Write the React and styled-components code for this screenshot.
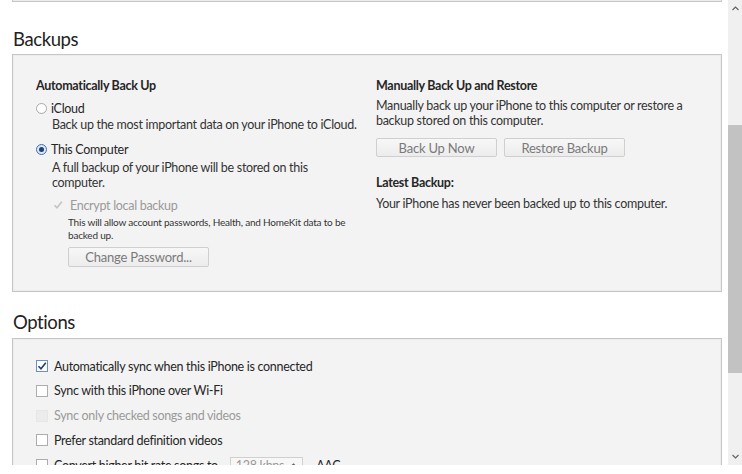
import React from 'react'
import styled, { createGlobalStyle } from 'styled-components'

const Global = createGlobalStyle`
  html, body { margin: 0; padding: 0; background: #fff; }
  body { font-family: Lato, "Open Sans", sans-serif; color: #262626; letter-spacing: -0.3px; }
`

const Window = styled.div`
  width: 742px;
  height: 474px;
  background: #fff;
`

const Viewport = styled.div`
  display: flex;
  height: 465px;
  overflow: hidden;
`

const Content = styled.div`
  flex: 1;
  padding: 0 6px 0 12px;
`

const Panel = styled.div`
  background: #f3f3f3;
  border: 1px solid #c6c6c6;
  box-shadow: inset 0 0 0 1px #ececec;
`

const TopStub = styled(Panel)`
  height: 2px;
  border-top: none;
  box-sizing: border-box;
`

const Heading = styled.h2`
  margin: 0;
  font-weight: 400;
  font-size: 18.5px;
  letter-spacing: -0.4px;
  line-height: 26px;
  padding: ${p => p.$pad};
  color: #222;
`

const BackupsBody = styled.div`
  display: grid;
  grid-template-columns: 340px 1fr;
  padding: 22px 24px 23px 23px;
  height: 236px;
  box-sizing: border-box;
  white-space: nowrap;
`

const Column = styled.div`
  display: flex;
  flex-direction: column;
  align-items: flex-start;
`

const Title = styled.div`
  font-weight: 700;
  font-size: 12.5px;
  line-height: 18px;
  margin-top: ${p => p.$mt || 0}px;
`

const Text = styled.div`
  font-size: 12.5px;
  line-height: ${p => p.$lh || 15}px;
  margin: ${p => p.$m || 0};
  padding-left: ${p => p.$indent || 0}px;
  color: #333;
`

const Small = styled.div`
  font-size: 10px;
  line-height: 13px;
  letter-spacing: -0.2px;
  margin-top: 2px;
  padding-left: 32px;
  color: #333;
`

const Choice = styled.label`
  display: flex;
  align-items: center;
  gap: ${p => p.$gap || 4}px;
  height: 18px;
  flex: none;
  margin-top: ${p => p.$mt || 0}px;
  padding-left: ${p => p.$indent || 0}px;
  font-size: 12.5px;
  white-space: nowrap;
  color: ${p => (p.$muted ? '#9a9a9a' : '#262626')};
`

const Radio = styled.span`
  width: 11px;
  height: 11px;
  border-radius: 50%;
  box-sizing: border-box;
  border: 1px solid ${p => (p.$on ? '#3d6fb6' : '#a8a8a8')};
  background: ${p => (p.$on ? '#dfe8f5' : '#fff')};
  display: flex;
  align-items: center;
  justify-content: center;
  &::after {
    content: '';
    width: 5px;
    height: 5px;
    border-radius: 50%;
    background: ${p => (p.$on ? '#1d3f7a' : 'transparent')};
  }
`

const Box = styled.span`
  width: 12px;
  height: 12px;
  box-sizing: border-box;
  border: 1px solid ${p => (p.$disabled ? '#e6e6e6' : p.$on ? '#6a8fc8' : '#adadad')};
  background: ${p => (p.$disabled ? '#ececec' : '#fff')};
  display: flex;
  align-items: center;
  justify-content: center;
  flex: none;
`

const Button = styled.button`
  width: ${p => p.$w}px;
  height: ${p => p.$h || 20}px;
  margin-top: ${p => p.$mt || 0}px;
  margin-left: ${p => p.$ml || 0}px;
  padding: 0;
  font-family: inherit;
  font-size: 13px;
  letter-spacing: -0.2px;
  color: #7a7a7a;
  background: linear-gradient(#f7f7f7, #ececec);
  border: 1px solid #cfcfcf;
  border-radius: 2px;
`

const ButtonRow = styled.div`
  display: flex;
  gap: 7px;
  margin-top: 10px;
`

const OptionsPanel = styled(Panel)`
  border-bottom: none;
  height: 200px;
  padding: 18px 23px 0;
  display: flex;
  flex-direction: column;
  gap: 6.8px;
`

const Spinner = styled.span`
  display: inline-flex;
  align-items: center;
  gap: 6px;
  height: 15px;
  padding: 0 5px;
  margin: 0 7px 0 6px;
  border: 1px solid #d0d0d0;
  background: #f7f7f7;
  color: #9a9a9a;
`

const Scrollbar = styled.div`
  width: 14px;
  background: #f0f0f0;
  display: flex;
  flex-direction: column;
  align-items: center;
`

const Arrow = styled.div`
  height: 17px;
  display: flex;
  align-items: center;
  justify-content: center;
`

const Track = styled.div`
  flex: 1;
  align-self: stretch;
  display: flex;
  flex-direction: column;
`

const Thumb = styled.div`
  margin-top: 108px;
  height: 248px;
  background: #c2c2c2;
`

const Check = ({ color = '#1d3f7a', size = 10 }) => (
  <svg width={size} height={size} viewBox="0 0 10 10">
    <path d="M1.5 5.2 L4 7.8 L8.8 1.8" fill="none" stroke={color} strokeWidth="1.6" />
  </svg>
)

const Chevron = ({ up }) => (
  <svg width="7" height="5" viewBox="0 0 7 5">
    <path d={up ? 'M0.5 4 L3.5 1 L6.5 4' : 'M0.5 1 L3.5 4 L6.5 1'} fill="none" stroke="#606060" strokeWidth="1.1" />
  </svg>
)

const options = [
  { label: 'Automatically sync when this iPhone is connected', on: true },
  { label: 'Sync with this iPhone over Wi-Fi' },
  { label: 'Sync only checked songs and videos', disabled: true },
  { label: 'Prefer standard definition videos' },
]

export default function App() {
  return (
    <Window>
      <Global />
      <Viewport>
        <Content>
          <TopStub />
          <Heading $pad="24px 0 2px 1px">Backups</Heading>
          <Panel>
            <BackupsBody>
              <Column>
                <Title>Automatically Back Up</Title>
                <Choice $mt={4}>
                  <Radio />
                  iCloud
                </Choice>
                <Text $lh={16} $indent={16}>Back up the most important data on your iPhone to iCloud.</Text>
                <Choice $mt={7}>
                  <Radio $on />
                  This Computer
                </Choice>
                <Text $indent={16} $m="2px 0 0">
                  A full backup of your iPhone will be stored on this
                  <br />
                  computer.
                </Text>
                <Choice $mt={6} $indent={17} $gap={7} $muted>
                  <Check color="#c4c4c4" />
                  Encrypt local backup
                </Choice>
                <Small>
                  This will allow account passwords, Health, and HomeKit data to be
                  <br />
                  backed up.
                </Small>
                <Button $w={141} $ml={32} $mt={5}>Change Password...</Button>
              </Column>
              <Column>
                <Title>Manually Back Up and Restore</Title>
                <Text $m="3px 0 0">
                  Manually back up your iPhone to this computer or restore a
                  <br />
                  backup stored on this computer.
                </Text>
                <ButtonRow>
                  <Button $w={121} $h={19}>Back Up Now</Button>
                  <Button $w={121} $h={19}>Restore Backup</Button>
                </ButtonRow>
                <Title $mt={17}>Latest Backup:</Title>
                <Text $m="4px 0 0">Your iPhone has never been backed up to this computer.</Text>
              </Column>
            </BackupsBody>
          </Panel>
          <Heading $pad="17px 0 3px 1px">Options</Heading>
          <OptionsPanel>
            {options.map(o => (
              <Choice key={o.label} $gap={6} $muted={o.disabled}>
                <Box $on={o.on} $disabled={o.disabled}>{o.on && <Check />}</Box>
                {o.label}
              </Choice>
            ))}
            <Choice $gap={6}>
              <Box />
              Convert higher bit rate songs to
              <Spinner>
                128 kbps <Chevron up />
              </Spinner>
              AAC
            </Choice>
          </OptionsPanel>
        </Content>
        <Scrollbar>
          <Arrow><Chevron up /></Arrow>
          <Track>
            <Thumb />
          </Track>
          <Arrow><Chevron /></Arrow>
        </Scrollbar>
      </Viewport>
    </Window>
  )
}
